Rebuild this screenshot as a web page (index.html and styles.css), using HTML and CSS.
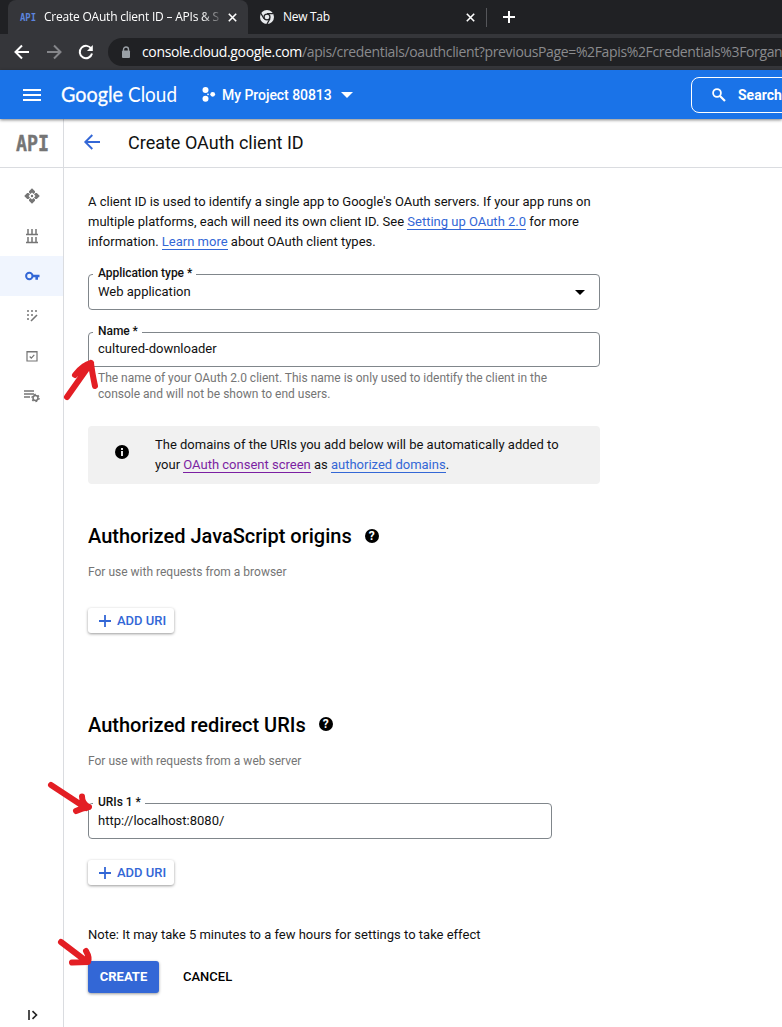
FILE: index.html
```html
<!DOCTYPE html>
<html lang="en">
<head>
<meta charset="utf-8">
<title>Create OAuth client ID – APIs &amp; Services</title>
<link rel="stylesheet" href="styles.css">
</head>
<body>
<div class="tabs">
  <div class="tab active">
    <svg class="favicon" width="16" height="14" viewBox="0 -1 16 14"><text x="0" y="9.5" textLength="16" lengthAdjust="spacingAndGlyphs">API</text></svg>
    <span class="tab-title">Create OAuth client ID – APIs &amp; S</span>
    <svg class="close" width="9" height="9" viewBox="0 0 9 9"><path d="M.8.8l7.4 7.4M8.2.8L.8 8.2"/></svg>
  </div>
  <div class="tab second">
    <svg width="14" height="14" viewBox="0 0 14 14"><circle cx="7" cy="7" r="7" fill="#e8eaed"/><circle cx="7" cy="7" r="3.6" fill="#202124"/><path d="M7 3.700h6.300M4 8.800L.9 3.400M10 8.800l-3.100 5.300" stroke="#202124" stroke-width="1.200"/><circle cx="7" cy="7" r="2.300" fill="#e8eaed"/></svg>
    <span class="tab-title">New Tab</span>
    <svg class="close" width="9" height="9" viewBox="0 0 9 9"><path d="M.8.8l7.4 7.4M8.2.8L.8 8.2"/></svg>
  </div>
  <span class="divider"></span>
  <svg class="newtab" width="12" height="12" viewBox="0 0 12 12"><path d="M6 0v12M0 6h12" stroke="#fff" stroke-width="2"/></svg>
</div>
<div class="toolbar">
  <svg class="nav-btn" width="16" height="16" viewBox="0 0 16 16"><path d="M15 8H2M8 1.5L1.5 8 8 14.5" stroke="#fff"/></svg>
  <svg class="nav-btn" width="16" height="16" viewBox="0 0 16 16"><path d="M1 8h13M8 1.5L14.5 8 8 14.5" stroke="#85868a"/></svg>
  <svg class="nav-btn" width="16" height="16" viewBox="0 0 16 16"><path d="M13.4 5A6.2 6.2 0 1 0 14 9.5" stroke="#fff"/><path d="M14.8 1v6H9z" fill="#fff"/></svg>
  <div class="omnibox">
    <svg width="10" height="13" viewBox="0 0 10 13"><path d="M2.5 5V3.5a2.5 2.5 0 0 1 5 0V5" fill="none" stroke="#9aa0a6" stroke-width="1.4"/><rect x="1" y="4.5" width="8" height="7.5" rx="1" fill="#9aa0a6"/></svg>
    <span class="url"><b>console.cloud.google.com</b><span>/apis/credentials/oauthclient?previousPage=%2Fapis%2Fcredentials%3Forgan</span></span>
  </div>
</div>
<header class="header">
  <svg class="menu" width="18" height="12" viewBox="0 0 18 12"><path d="M0 1h18M0 6h18M0 11h18" stroke="#fff" stroke-width="2"/></svg>
  <svg class="logo" width="118" height="30" viewBox="0 0 118 30"><text class="google" x="0" y="21.500" textLength="62" lengthAdjust="spacingAndGlyphs">Google</text><text x="67" y="21.500" textLength="49" lengthAdjust="spacingAndGlyphs">Cloud</text></svg>
  <svg class="project-icon" width="13" height="15" viewBox="0 0 13 15"><circle cx="3.500" cy="3" r="3"/><circle cx="3.500" cy="11.700" r="3"/><circle cx="10.700" cy="7.300" r="2.400"/><circle cx="6" cy="7.300" r=".9"/></svg>
  <span class="project">My Project 80813</span>
  <svg class="caret" width="12" height="6" viewBox="0 0 12 6"><path d="M0 0h12L6 6z" fill="#fff"/></svg>
  <div class="search">
    <svg width="14" height="14" viewBox="0 0 14 14"><circle cx="5" cy="5" r="3.900" fill="none" stroke="#fff" stroke-width="1.800"/><path d="M8 8l5 5" stroke="#fff" stroke-width="2.200"/></svg>
    <span>Search</span>
  </div>
</header>
<div class="body">
  <nav class="side">
    <div class="product"><svg width="32" height="22" viewBox="0 -2 32 22"><text x="0" y="17" textLength="33" lengthAdjust="spacingAndGlyphs">API</text></svg></div>
    <div class="items">
      <div class="item"><svg width="16" height="16" viewBox="0 0 16 16"><path d="M8 .2l3 3v1.300L9.500 6 8 4.500 6.500 6 5 4.500V3.200zM8 15.800l3-3v-1.300L9.500 10 8 11.500 6.500 10 5 11.500v1.300zM.2 8l3-3h1.300L6 6.500 4.500 8 6 9.500 4.500 11H3.200zM15.800 8l-3-3h-1.300L10 6.500 11.500 8 10 9.500l1.500 1.500h1.300z"/><circle cx="8" cy="8" r="1.200"/></svg></div>
      <div class="item"><svg width="14" height="16" viewBox="0 0 14 16"><path d="M1 6.500h12M1 14.500h12M3 1v5M7 1v5M11 1v5M3 9v5M7 9v5M11 9v5" stroke="#757575" stroke-width="1.500"/></svg></div>
      <div class="item selected"><svg width="15" height="10" viewBox="0 0 15 10"><circle cx="4.300" cy="5" r="3.200" fill="none" stroke="#3367d6" stroke-width="2"/><path d="M7.500 3.800H14.500v2.500H13v2.400h-2.600V6.300H7.500z" fill="#3367d6"/></svg></div>
      <div class="item"><svg width="12" height="12" viewBox="0 0 12 12"><path d="M1 1h2M5 1h2M9 1h2M1 5h2M5 5h2M1 9h2" stroke="#757575" stroke-width="1.700"/><path d="M5 11l6-6" stroke="#757575" stroke-width="1.600"/></svg></div>
      <div class="item"><svg width="12" height="12" viewBox="0 0 12 12"><path d="M1 1.500h10v9.500H1zM1 2h10" fill="none" stroke="#757575" stroke-width="1.200"/><path d="M3.700 6.500l1.600 1.600 3-3.200" fill="none" stroke="#757575" stroke-width="1.200"/></svg></div>
      <div class="item"><svg width="16" height="14" viewBox="0 0 16 14"><path d="M0 2h10M0 5h10M0 8h6" stroke="#757575" stroke-width="1.300"/><circle cx="11.500" cy="9" r="2.500" fill="none" stroke="#757575" stroke-width="1.500"/><circle cx="11.500" cy="9" r="3.600" fill="none" stroke="#757575" stroke-width="1.300" stroke-dasharray="1.800 1.970"/></svg></div>
    </div>
    <svg class="expand" width="10" height="10" viewBox="0 0 10 10"><path d="M1 0v10M4.500 1.200L8.500 5l-4 3.800" fill="none" stroke="#222" stroke-width="1.600"/></svg>
  </nav>
  <main class="main">
    <div class="title-bar">
      <svg width="16" height="16" viewBox="0 0 16 16"><path d="M16 7H1.500M8.300 0L1.300 7l7 7" fill="none" stroke="#3367d6" stroke-width="1.900"/></svg>
      <h1>Create OAuth client ID</h1>
    </div>
    <div class="content">
      <p class="intro">A client ID is used to identify a single app to Google's OAuth servers. If your app runs on<br>multiple platforms, each will need its own client ID. See <a>Setting up OAuth 2.0</a> for more<br>information. <a>Learn more</a> about OAuth client types.</p>
      <div class="field">
        <label>Application type *</label><span class="value">Web application</span>
        <svg width="10" height="5" viewBox="0 0 10 5"><path d="M0 0h10L5 5z"/></svg>
      </div>
      <div class="field name"><label>Name *</label><span class="value">cultured-downloader</span>
        <svg class="arrow a1" width="38" height="46" viewBox="0 0 38 46"><path d="M6 40L30 6M14 18Q22 8 30 6Q31 15 34 29"/></svg>
      </div>
      <p class="helper">The name of your OAuth 2.0 client. This name is only used to identify the client in the<br>console and will not be shown to end users.</p>
      <div class="notice">
        <svg width="14" height="14" viewBox="0 0 14 14"><circle cx="7" cy="7" r="7"/><path d="M7 3v2M7 6v5" stroke="#fff" stroke-width="1.800"/></svg>
        <p>The domains of the URIs you add below will be automatically added to<br>your <a class="visited">OAuth consent screen</a> as <a>authorized domains</a>.</p>
      </div>
      <h2>Authorized JavaScript origins <span class="help">?</span></h2>
      <p class="sub">For use with requests from a browser</p>
      <div class="add"><svg width="12" height="12" viewBox="0 0 12 12"><path d="M6 0v12M0 6h12" stroke="#3367d6" stroke-width="1.800"/></svg>ADD URI</div>
      <h2 class="redirect">Authorized redirect URIs <span class="help">?</span></h2>
      <p class="sub">For use with requests from a web server</p>
      <div class="field uri"><label>URIs 1 *</label><span class="value">http://localhost:8080/</span>
        <svg class="arrow a2" width="46" height="36" viewBox="0 0 46 36"><path d="M5 5L40 28M36 16.500Q36 24 43 27Q36 28 30 31"/></svg>
      </div>
      <div class="add"><svg width="12" height="12" viewBox="0 0 12 12"><path d="M6 0v12M0 6h12" stroke="#3367d6" stroke-width="1.800"/></svg>ADD URI</div>
      <p class="note">Note: It may take 5 minutes to a few hours for settings to take effect</p>
      <div class="actions">
        <div class="create">CREATE<svg class="arrow a3" width="38" height="32" viewBox="0 0 38 32"><path d="M6 6L31 25M31 15Q35 22 33 26Q25 26 17 26.500"/></svg></div>
        <div class="cancel">CANCEL</div>
      </div>
    </div>
  </main>
</div>
</body>
</html>
```
FILE: styles.css
```css
* { box-sizing: border-box; }
body { margin: 0; width: 782px; height: 1027px; overflow: hidden; background: #fff; color: #111; font: 13px/20px Roboto, sans-serif; display: flex; flex-direction: column; }
p, h1, h2 { margin: 0; }
svg { flex: none; display: block; overflow: visible; }
.tabs { height: 34px; flex: none; background: #202124; display: flex; align-items: center; padding-left: 8px; font-family: "Open Sans", "Noto Sans", sans-serif; font-size: 12px; color: #fff; }
.tab { height: 34px; display: flex; align-items: center; white-space: nowrap; }
.tab.active { width: 240px; background: #35363a; border-radius: 8px 8px 0 0; padding-left: 12px; }
.favicon text { font: bold 10px "DejaVu Sans Mono", monospace; fill: #5c85de; }
.tab-title { margin-left: 8px; letter-spacing: -.3px; }
.active .tab-title { width: 177px; overflow: hidden; letter-spacing: -.22px; -webkit-mask-image: linear-gradient(90deg, #000 158px, transparent 180px); mask-image: linear-gradient(90deg, #000 158px, transparent 180px); }
.close { stroke: #fff; stroke-width: 1.6; margin-left: auto; }
.active .close { margin-left: 7px; }
.second { width: 227px; padding-left: 12px; }
.second .tab-title { margin-left: 9px; }
.divider { width: 1px; height: 19px; background: #55565a; margin-left: 11px; }
.newtab { margin-left: 16px; }
.toolbar { height: 36px; flex: none; background: #35363a; display: flex; align-items: center; padding-left: 14px; gap: 16px; }
.nav-btn path { fill: none; stroke-width: 2; }
.nav-btn path[fill] { fill: #fff; }
.omnibox { flex: 1; min-width: 0; height: 28px; margin-left: -2px; background: #202124; border-radius: 14px 0 0 14px; display: flex; align-items: center; padding-left: 13px; gap: 11px; overflow: hidden; }
.url { font: 14px/20px "Open Sans", "Noto Sans", sans-serif; white-space: nowrap; color: #8a8b8e; letter-spacing: -.36px; }
.url b { font-weight: 400; color: #fff; }
.header { height: 49px; flex: none; background: #1a73e8; color: #fff; display: flex; align-items: center; padding-left: 23px; position: relative; box-shadow: 0 1px 3px rgba(0,0,0,.5); }
.logo { margin-left: 20px; }
.logo text { font: 21px Lato, sans-serif; fill: #fff; }
.logo .google { stroke: #fff; stroke-width: .3px; }
.project-icon { margin-left: 23px; fill: #fff; }
.project { font-size: 14px; font-weight: 500; margin-left: 7px; white-space: nowrap; letter-spacing: -.05px; }
.caret { margin-left: 9px; }
.search { width: 120px; height: 36px; border: 1px solid #fff; border-radius: 8px; margin-left: auto; margin-right: -29px; display: flex; align-items: center; padding-left: 20px; gap: 12px; font-size: 14px; font-weight: 700; }
.body { flex: 1; display: flex; min-height: 0; }
.side { width: 64px; border-right: 1px solid #dadce0; display: flex; flex-direction: column; }
.product { height: 49px; border-bottom: 1px solid #dadce0; display: flex; align-items: center; justify-content: center; padding-left: 1px; }
.product text { font: bold 22px "DejaVu Sans Mono", monospace; fill: #757575; stroke: #757575; stroke-width: .4px; }
.items { padding-top: 8px; }
.item { height: 40px; display: flex; align-items: center; justify-content: center; fill: #757575; }
.selected { background: #f0f5fe; padding-left: 1px; }
.expand { margin: auto 0 7px 28px; }
.main { flex: 1; min-width: 0; }
.title-bar { height: 49px; border-bottom: 1px solid #dadce0; display: flex; align-items: center; gap: 28px; padding-left: 20px; }
h1 { font-size: 18px; font-weight: 400; line-height: 24px; }
.content { padding: 24px 0 0 24px; white-space: nowrap; }
a { color: #3367d6; border-bottom: 1px solid #3367d6; }
a.visited { color: #7b1fa2; border-color: #7b1fa2; }
.field { width: 512px; height: 36px; border: 1px solid #80868b; border-radius: 4px; margin-top: 22px; position: relative; padding: 0 14px 0 9px; display: flex; align-items: center; justify-content: space-between; }
.field label { position: absolute; top: -12px; left: 4px; padding: 0 4px 0 5px; background: #fff; font-size: 12px; font-weight: 500; line-height: 20px; letter-spacing: -.05px; }
.name { height: 35px; padding-bottom: 2px; }
.helper { margin: 3px 0 0 10px; font-size: 12px; line-height: 16px; color: #757575; }
.notice { width: 512px; height: 58px; background: #f1f1f1; border-radius: 4px; margin-top: 24px; padding: 9px 0 0 27px; display: flex; gap: 26px; }
.notice svg { margin-top: 10px; }
h2 { margin-top: 38px; font-size: 20px; font-weight: 500; line-height: 28px; display: flex; align-items: center; gap: 13px; color: #000; }
.help { width: 14px; height: 14px; border-radius: 7px; background: #000; color: #fff; font-size: 12px; line-height: 15px; font-weight: 700; text-align: center; }
.sub { margin-top: 12px; font-size: 12px; color: #757575; }
.add { width: 86px; height: 25px; margin-top: 26px; border-radius: 3px; box-shadow: 0 1px 3px rgba(0,0,0,.4); display: flex; align-items: center; padding-left: 11px; gap: 6px; color: #3367d6; font-weight: 500; }
.redirect { margin-top: 78px; }
.redirect .help { margin-bottom: 2px; }
.uri { width: 464px; margin-top: 32px; }
.uri + .add { margin-top: 21px; }
.note { margin-top: 40px; }
.actions { display: flex; margin-top: 16px; height: 32px; line-height: 32px; font-weight: 500; }
.create { width: 71px; background: #3367d6; color: #fff; border-radius: 3px; text-align: center; position: relative; box-shadow: 0 1px 3px rgba(0,0,0,.4); font-weight: 700; }
.cancel { margin-left: 24px; color: #000; }
.arrow { position: absolute; overflow: visible; }
.arrow path { fill: none; stroke: #e31e24; stroke-width: 6; stroke-linecap: round; stroke-linejoin: round; }
.a1 { left: -28px; top: 24px; }
.a2 { left: -43px; top: -24px; }
.a3 { left: -33px; top: -25px; }
```
